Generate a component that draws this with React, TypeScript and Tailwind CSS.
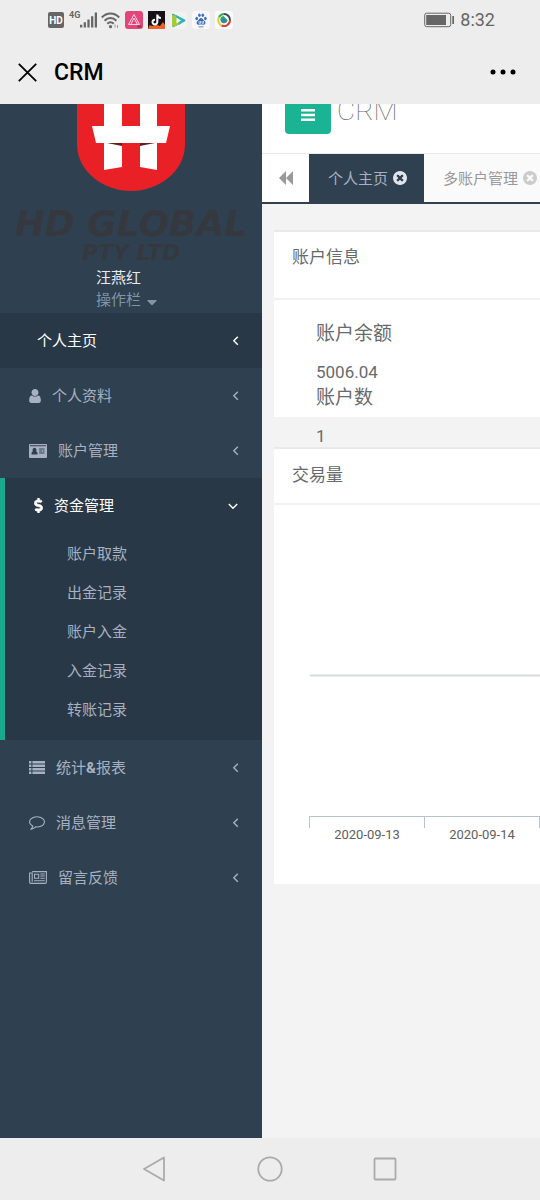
import type { ReactNode } from 'react'
import { FaCaretDown, FaDollarSign } from 'react-icons/fa'

interface MenuItem {
  label: ReactNode
  icon?: ReactNode
  children?: string[]
  current?: boolean
}

function UserIcon() {
  return (
    <svg viewBox="256 128 1280 1536" className="h-[14px] w-3 fill-current" aria-hidden="true">
      <path d="M1536 1399q0 109-62.5 187t-150.5 78h-854q-88 0-150.5-78t-62.5-187q0-85 8.5-160.5t31.5-152 58.5-131 94-89 134.5-34.5q131 128 313 128t313-128q76 0 134.5 34.5t94 89 58.5 131 31.5 152 8.500 160.500zm-256-887q0 159-112.500 271.500t-271.500 112.500-271.500-112.500-112.500-271.500 112.500-271.500 271.500-112.500 271.500 112.500 112.500 271.500z" />
    </svg>
  )
}

function CardIcon() {
  return (
    <svg viewBox="0 0 18 14" className="h-[14px] w-[18px]" aria-hidden="true">
      <path
        fill="currentColor"
        fillRule="evenodd"
        d="M1 0h16a1 1 0 0 1 1 1v12a1 1 0 0 1-1 1H1a1 1 0 0 1-1-1V1a1 1 0 0 1 1-1zM1 1.200v1h16v-1zM2.500 10.500h6c.2-1.800-.5-3-1.600-3.200a2 2 0 1 0-2.800 0c-1.100.2-1.800 1.400-1.600 3.200zM10.200 4.500v1h5.300v-1zM10.200 6.500v1h3v-1zM14 6.500v1h1.500v-1zM10.200 8.500v1h5.300v-1z"
      />
    </svg>
  )
}

function ListIcon() {
  return (
    <svg viewBox="0 0 16 13" className="h-[13px] w-4 fill-current" aria-hidden="true">
      <path d="M0 0h2.400v2.500H0zM3.400 0H16v2.500H3.400zM0 3.500h2.400V6H0zM3.400 3.500H16V6H3.400zM0 7h2.400v2.500H0zM3.400 7H16v2.500H3.400zM0 10.500h2.400V13H0zM3.400 10.500H16V13H3.400z" />
    </svg>
  )
}

function CommentIcon() {
  return (
    <svg viewBox="0 256 1792 1536" className="h-[14px] w-4 fill-current" aria-hidden="true">
      <path d="M896 384q-204 0-381.5 69.5t-282 187.5-104.5 255q0 112 71.5 213.5t201.5 175.5l87 50-27 96q-24 91-70 172 152-63 275-171l43-38 57 6q69 8 130 8 204 0 381.5-69.5t282-187.5 104.5-255-104.5-255-282-187.5-381.5-69.5zm896 512q0 174-120 321.5t-326 233-450 85.5q-70 0-145-8-198 175-460 242-49 14-114 22h-5q-15 0-27-10.5t-16-27.5v-1q-3-4-.5-12t2-10 4.5-9.5l6-9 7-8.5 8-9q7-8 31-34.5t34.5-38 31-39.5 32.5-51 27-59 26-76q-157-89-247.5-220t-90.5-281q0-174 120-321.5t326-233 450-85.5 450 85.5 326 233 120 321.5z" />
    </svg>
  )
}

function NewsIcon() {
  return (
    <svg viewBox="0 0 18 13" className="h-[13px] w-[18px]" fill="none" stroke="currentColor" aria-hidden="true">
      <path d="M3.200.6h14.200v10.500c0 .8-.5 1.300-1.300 1.300H2c-.8 0-1.400-.6-1.400-1.400V2h2.600v9" strokeWidth="1.100" />
      <path d="M5.500 3.200h4.200v4H5.500zM11.300 3h4.500M11.300 5h4.500M11.300 7.200h4.500M5 9.800h10.800" strokeWidth="1.100" />
    </svg>
  )
}

function AngleIcon({ open }: { open?: boolean }) {
  return (
    <svg
      viewBox="0 0 10 10"
      className={open ? 'mr-[2px] h-[10px] w-[10px]' : 'h-[10px] w-[10px]'}
      fill="none"
      stroke="currentColor"
      strokeWidth="1.400"
      aria-hidden="true"
    >
      <path d={open ? 'M.8 3 5 7.200 9.200 3' : 'M7.800.8 3.800 4.800l4 4'} />
    </svg>
  )
}

function TimesCircleIcon() {
  return (
    <svg viewBox="128 128 1536 1536" className="h-[14px] w-[14px] fill-current" aria-hidden="true">
      <path d="M1277 1122q0-26-19-45l-181-181 181-181q19-19 19-45 0-27-19-46l-90-90q-19-19-46-19-26 0-45 19l-181 181-181-181q-19-19-45-19-27 0-46 19l-90 90q-19 19-19 46 0 26 19 45l181 181-181 181q-19 19-19 45 0 27 19 46l90 90q19 19 46 19 26 0 45-19l181-181 181 181q19 19 45 19 27 0 46-19l90-90q19-19 19-46zm387-226q0 209-103 385.5t-279.5 279.5-385.5 103-385.5-103-279.5-279.5-103-385.5 103-385.5 279.5-279.5 385.5-103 385.5 103 279.5 279.5 103 385.5z" />
    </svg>
  )
}

const menu: MenuItem[] = [
  { label: '个人主页', current: true },
  { label: '个人资料', icon: <UserIcon /> },
  { label: '账户管理', icon: <CardIcon /> },
  {
    label: '资金管理',
    icon: <FaDollarSign className="ml-[5px] h-[15px] w-[9px]" stroke="currentColor" strokeWidth="20" />,
    children: ['账户取款', '出金记录', '账户入金', '入金记录', '转账记录'],
  },
  {
    label: (
      <>
        统计<b>&amp;</b>报表
      </>
    ),
    icon: <ListIcon />,
  },
  { label: '消息管理', icon: <CommentIcon /> },
  { label: '留言反馈', icon: <NewsIcon /> },
]

const days = ['2020-09-13', '2020-09-14']
const dayWidth = 115

function StatusBar() {
  return (
    <div className="flex h-10 items-center justify-between pr-[45px] pl-12 text-[#666]">
      <div className="flex items-center gap-[5px]">
        <span className="flex h-4 w-4 items-center justify-center rounded-xs bg-[#666] text-[10px] font-bold text-white">
          HD
        </span>
        <div className="flex h-[18px] w-[27px] items-start">
          <span className="text-[9px] leading-[9px] font-bold">4G</span>
          <svg viewBox="0 0 18 16" className="mt-[1px] h-4 w-[17px] shrink-0 fill-current" aria-hidden="true">
            <path d="M0 13h2.400v3H0zM3.900 10.500h2.400V16H3.900zM7.800 7.500h2.400V16H7.800zM11.700 4h2.400v12h-2.400zM15.600 0H18v16h-2.400z" />
          </svg>
        </div>
        <svg viewBox="0 0 19 17" className="h-[17px] w-[19px]" fill="none" stroke="currentColor" strokeWidth="2" aria-hidden="true">
          <path d="M.8 5.500C5.800.2 13.200.2 18.200 5.500M3.600 8.700c3.400-3.700 8.400-3.700 11.800 0M6.300 11.800c1.900-2 4.500-2 6.400 0" />
          <circle cx="9.500" cy="14.700" r="1.600" fill="currentColor" stroke="none" />
          <path d="M14 12.500v3M16.500 13v3" strokeWidth="1" opacity=".6" />
        </svg>
        <svg viewBox="0 0 18 18" className="h-[18px] w-[18px]" fill="none" stroke="#ffd3df" aria-hidden="true">
          <rect width="18" height="18" rx="3" fill="#e2457a" stroke="none" />
          <path d="M9 3.500 3.500 13.500h11zM9 7l-3 6M9 7l3.200 6" strokeLinejoin="round" />
          <path d="M12.500 15.500h4" stroke="#8b3350" strokeWidth="2" />
        </svg>
        <svg viewBox="0 0 17 18" className="h-[18px] w-[17px]" fill="none" aria-hidden="true">
          <path d="M0 0h17v18H0z" fill="#171014" />
          <path d="m0 18 1.500-4L4 15l5-1 3 1 3-4 2 3v4z" fill="#e9632b" />
          <path d="M9.300 3.500v7.600a2.400 2.400 0 1 1-2.300-2.400M9.300 4c.5 2 1.700 3 3.600 3" stroke="#fff" strokeWidth="2" />
        </svg>
        <svg viewBox="0 0 17 17" className="h-[17px] w-[17px]" aria-hidden="true">
          <rect width="17" height="17" rx="3" fill="#f2f2f2" />
          <path d="M2 3c0-1 .9-1.500 1.800-1l11 5.500c.9.500.9 1.500 0 2L3.800 15c-.9.500-1.800 0-1.800-1z" fill="#29a8dd" />
          <path d="M2.500 2.200 8 3.900l6.500 4.700L9 13z" fill="#35b8a6" />
          <path d="M2 3v11c0 1 .9 1.500 1.800 1L9 12 8 8.500 5 3z" fill="#a4c93c" />
          <path d="m6.500 5.800 4.500 2.700-4.500 2.700z" fill="#fff" />
        </svg>
        <svg viewBox="0 0 18 18" className="h-[18px] w-[18px]" fill="#3c6cc0" aria-hidden="true">
          <rect width="18" height="18" rx="3" fill="#f8f8f8" />
          <ellipse cx="4.700" cy="7.500" rx="1.300" ry="1.700" />
          <ellipse cx="7.400" cy="4.300" rx="1.300" ry="1.700" />
          <ellipse cx="10.800" cy="4.300" rx="1.300" ry="1.700" />
          <ellipse cx="13.400" cy="7.500" rx="1.300" ry="1.700" />
          <path d="M9 7c1.500 0 2 1.500 3 2.500 1.300 1 1.800 2 1.200 3.200-.8 1.500-2.700.8-4.200.8s-3.400.7-4.200-.8c-.6-1.200-.1-2.200 1.200-3.200C7 8.500 7.500 7 9 7z" />
          <path d="M7 10v2.300h1.500V10M10 10v2.300h1.500V10" fill="none" stroke="#fff" strokeWidth=".7" />
          <path d="M6.500 15.500h5v.8h-5z" />
        </svg>
        <svg viewBox="0 0 18 18" className="h-[18px] w-[18px]" fill="none" strokeWidth="2" aria-hidden="true">
          <rect width="18" height="18" rx="3" fill="#fbfbfb" />
          <path d="M9 3a6 6 0 0 1 6 6" stroke="#3a4a54" />
          <path d="M15 9a6 6 0 0 1-8.500 5.500" stroke="#d8403a" />
          <path d="M6.500 14.500A6 6 0 0 1 4 6" stroke="#d9d13a" />
          <path d="M4 6a6 6 0 0 1 5-3" stroke="#3ca85c" />
          <path d="M8.500 5 12.500 9a3.600 3.600 0 1 1-4-4z" fill="#2aa66c" />
          <circle cx="8.800" cy="9.500" r="1.800" fill="#3878c8" />
        </svg>
      </div>
      <div className="flex items-center gap-[5px]">
        <svg viewBox="0 0 31 16" className="h-4 w-[31px]" aria-hidden="true">
          <rect x=".7" y="1.200" width="26" height="13.500" rx="2" fill="none" stroke="currentColor" />
          <path d="M2.200 3h19.800v10H2.200zM28.300 4h1.700v8h-1.700z" fill="currentColor" />
        </svg>
        <span className="text-lg">8:32</span>
      </div>
    </div>
  )
}

function TitleBar() {
  return (
    <header className="flex h-16 items-center justify-between pr-6 pl-[18px] text-black">
      <div className="flex items-center gap-[17px]">
        <button aria-label="Close">
          <svg viewBox="0 0 19 19" className="h-[19px] w-[19px]" stroke="currentColor" strokeWidth="1.800" aria-hidden="true">
            <path d="m.8.8 17.400 17.400M18.200.8.8 18.200" />
          </svg>
        </button>
        <h1 className="pt-[2px] text-[23px] font-medium">CRM</h1>
      </div>
      <button aria-label="More">
        <svg viewBox="0 0 26 6" className="h-[6px] w-[26px] fill-current" aria-hidden="true">
          <circle cx="3" cy="3" r="2.500" />
          <circle cx="13" cy="3" r="2.500" />
          <circle cx="23" cy="3" r="2.500" />
        </svg>
      </button>
    </header>
  )
}

function Brand() {
  return (
    <div className="flex h-[209px] flex-col items-center">
      <svg viewBox="0 0 108 87" className="h-[87px] w-[108px] shrink-0" aria-hidden="true">
        <path d="M0 0h108v40c0 28-27 47-54 47S0 68 0 40z" fill="#e92127" />
        <path
          d="M27 0h18v22h18V0h17v22h13l-4 17h-9v27l-17-3V39H45v24l-18 3V39h-8l-4-17h12z"
          fill="#fff"
        />
        <path d="M30 39h15v3zM78 39H63v3z" fill="#6e1b1e" />
      </svg>
      <div className="mt-4 text-center font-['DejaVu_Sans',sans-serif] font-bold whitespace-nowrap text-[#36383f] italic">
        <p className="text-4xl leading-[34px]">HD GLOBAL</p>
        <p className="text-[22px] leading-6">PTY LTD</p>
      </div>
      <div className="flex w-[70px] flex-col items-start text-[15px] leading-[22px] whitespace-nowrap">
        <span className="mt-[2px] text-[#e6ebf2]">汪燕红</span>
        <button className="flex items-center gap-[6px] text-[#8095a8]">
          操作栏
          <FaCaretDown className="mt-1 h-4 w-[10px]" />
        </button>
      </div>
    </div>
  )
}

function SidebarItem({ label, icon, children, current }: MenuItem) {
  const link = (
    <a href="#" className="flex h-[55px] items-center justify-between pr-[22px] pl-[29px]">
      <span className="flex items-center gap-[11px]">
        {icon}
        <span className={current ? 'pt-[2px] pl-2' : 'pt-[2px]'}>{label}</span>
      </span>
      <AngleIcon open={!!children} />
    </a>
  )

  if (children) {
    return (
      <li className="relative bg-[#293846] pb-[10px] text-white before:absolute before:inset-y-0 before:left-0 before:w-[5px] before:bg-[#19aa8d]">
        {link}
        <ul className="pt-[2px] text-[#a7b1c2]">
          {children.map((child) => (
            <li key={child}>
              <a href="#" className="flex h-[39px] items-center pl-[67px]">
                {child}
              </a>
            </li>
          ))}
        </ul>
      </li>
    )
  }

  return <li className={current ? 'bg-[#293846] text-white' : 'text-[#a7b1c2]'}>{link}</li>
}

function Tabs() {
  return (
    <nav className="flex h-[50px] overflow-hidden border-b-2 border-[#2f4050] bg-[#fafafa] text-[15px] whitespace-nowrap text-[#999]">
      <button aria-label="Back" className="flex w-[47px] shrink-0 items-center justify-center bg-white">
        <svg viewBox="0 0 14 14" className="h-[14px] w-[14px] fill-current" aria-hidden="true">
          <path d="M7 0v14L0 7zM14 0v14L7 7z" />
        </svg>
      </button>
      <a href="#" className="flex w-[115px] shrink-0 items-center gap-[5px] bg-[#2f4050] pl-[19px] text-[#a7b1c2]">
        <span className="pt-[2px]">个人主页</span>
        <span className="text-[#dfe4ed]">
          <TimesCircleIcon />
        </span>
      </a>
      <a href="#" className="flex shrink-0 items-center gap-[5px] pl-[19px]">
        <span className="pt-[2px]">多账户管理</span>
        <span className="text-[#ccc]">
          <TimesCircleIcon />
        </span>
      </a>
    </nav>
  )
}

function VolumeChart() {
  return (
    <svg className="h-[379px] w-full text-[13px]" role="img" aria-label="交易量">
      <line x1="36" x2="100%" y1="170.500" y2="170.500" stroke="#d5dadd" strokeWidth="2" />
      <line x1="35" x2="100%" y1="311.500" y2="311.500" stroke="#b6c3cc" />
      {days.map((day, i) => (
        <g key={day}>
          <path d={`M${35.5 + i * dayWidth} 311v12`} stroke="#b6c3cc" />
          <text x={93 + i * dayWidth} y="334" textAnchor="middle" fill="#606060">
            {day}
          </text>
        </g>
      ))}
      <path d={`M${35.5 + days.length * dayWidth} 311v12`} stroke="#b6c3cc" />
    </svg>
  )
}

function NavigationBar() {
  return (
    <footer className="flex h-[62px] items-center justify-center gap-[89px] bg-[#ededed] text-[#aaa]">
      <button aria-label="Back">
        <svg viewBox="0 0 26 26" className="h-[26px] w-[26px]" fill="none" stroke="currentColor" strokeWidth="1.800" strokeLinejoin="round" aria-hidden="true">
          <path d="M22 1.500v23L2 13z" />
        </svg>
      </button>
      <button aria-label="Home">
        <svg viewBox="0 0 26 26" className="h-[26px] w-[26px]" fill="none" stroke="currentColor" strokeWidth="1.800" aria-hidden="true">
          <circle cx="13" cy="13" r="11.700" />
        </svg>
      </button>
      <button aria-label="Recent">
        <svg viewBox="0 0 26 26" className="h-[26px] w-[26px]" fill="none" stroke="currentColor" strokeWidth="1.800" aria-hidden="true">
          <rect x="2.500" y="2.500" width="21" height="21" rx="1" />
        </svg>
      </button>
    </footer>
  )
}

export default function App() {
  return (
    <div className="flex min-h-screen flex-col bg-[#ededed] font-[Roboto,'Noto_Sans_CJK_SC',sans-serif]">
      <StatusBar />
      <TitleBar />
      <div className="flex flex-1 overflow-hidden bg-[#f3f3f4]">
        <aside className="w-[262px] shrink-0 bg-[#2f4050]">
          <Brand />
          <ul className="text-[15px]">
            {menu.map((item, i) => (
              <SidebarItem key={i} {...item} />
            ))}
          </ul>
        </aside>

        <main className="min-w-0 flex-1 text-[#676a6c]">
          <div className="flex h-[50px] items-start gap-[6px] overflow-hidden border-b border-[#e7eaec] bg-white pl-[23px]">
            <button
              aria-label="Menu"
              className="-mt-2 flex h-[38px] w-[46px] items-center justify-center rounded-[4px] bg-[#1ab394] text-white"
            >
              <svg viewBox="0 0 14 12" className="h-3 w-[14px] fill-current" aria-hidden="true">
                <path d="M0 0h14v2.400H0zM0 4.800h14v2.400H0zM0 9.600h14V12H0z" />
              </svg>
            </button>
            <h2 className="-mt-[10px] text-[28px] leading-[34px] font-thin">CRM</h2>
          </div>
          <Tabs />

          <div className="flex flex-col gap-[30px] pt-[26px] pl-3">
            {/* the last row of figures runs past the bottom of the panel */}
            <section className="h-[187px] border-t-2 border-[#e7eaec] bg-white">
              <h3 className="h-[68px] border-b-2 border-[#f0f1f2] px-[18px] pt-[13px] text-[17px] leading-6">
                账户信息
              </h3>
              <div className="px-[42px] pt-[21px] leading-[26px]">
                <h4 className="pb-3 text-[19px]">账户余额</h4>
                <p className="text-[17px]">5006.04</p>
                <h4 className="pb-3 text-[19px]">账户数</h4>
                <p className="text-[17px]">1</p>
              </div>
            </section>
            <section className="border-t-2 border-[#e7eaec] bg-white">
              <h3 className="h-14 border-b-2 border-[#f0f1f2] px-[18px] pt-[14px] text-[17px] leading-6">交易量</h3>
              <VolumeChart />
            </section>
          </div>
        </main>
      </div>
      <NavigationBar />
    </div>
  )
}
